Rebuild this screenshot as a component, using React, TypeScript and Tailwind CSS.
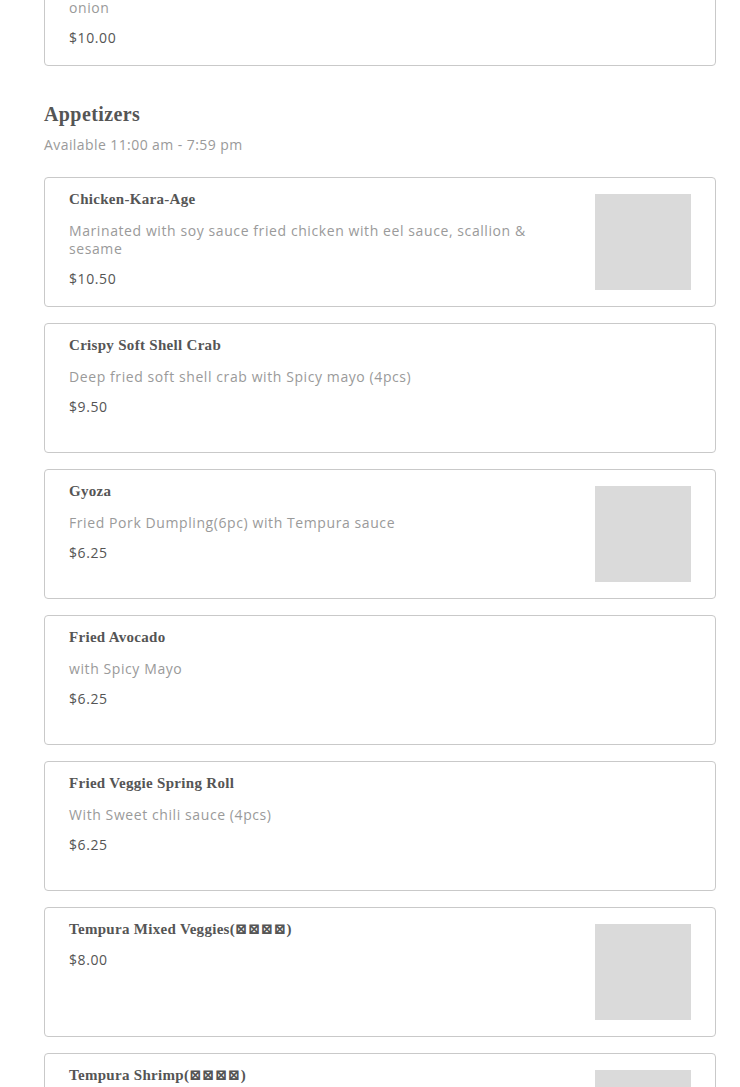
const serif = { fontFamily: '"Liberation Serif", "DejaVu Serif", serif' }

type Item = {
  name: string
  desc?: string
  price: string
  image?: boolean
}

const appetizers: Item[] = [
  { name: 'Chicken-Kara-Age', desc: 'Marinated with soy sauce fried chicken with eel sauce, scallion & sesame', price: '$10.50', image: true },
  { name: 'Crispy Soft Shell Crab', desc: 'Deep fried soft shell crab with Spicy mayo (4pcs)', price: '$9.50' },
  { name: 'Gyoza', desc: 'Fried Pork Dumpling(6pc) with Tempura sauce', price: '$6.25', image: true },
  { name: 'Fried Avocado', desc: 'with Spicy Mayo', price: '$6.25' },
  { name: 'Fried Veggie Spring Roll', desc: 'With Sweet chili sauce (4pcs)', price: '$6.25' },
  { name: 'Tempura Mixed Veggies(⊠⊠⊠⊠)', price: '$8.00', image: true },
  { name: 'Tempura Shrimp(⊠⊠⊠⊠)', price: '$9.00', image: true },
]

function MenuCard({ item }: { item: Item }) {
  return (
    <div className="flex items-start justify-between gap-4 min-h-[130px] rounded-[4px] border border-[#c9c9c9] bg-white px-6">
      <div className="flex-1 pt-[11px] pb-4">
        <div className="text-[15px] leading-[20px] font-bold tracking-[0.02em] text-[#555]" style={serif}>
          {item.name}
        </div>
        {item.desc && (
          <p className="mt-[13px] text-[14px] leading-[18px] tracking-[0.042em] text-[#9a9a9a] font-['Open_Sans',sans-serif]">
            {item.desc}
          </p>
        )}
        <div className="mt-[12px] text-[14px] leading-[18px] tracking-[0.042em] text-[#555] font-['Open_Sans',sans-serif]">
          {item.price}
        </div>
      </div>
      {item.image && <div className="mt-4 h-24 w-24 shrink-0 bg-[#dadada]" />}
    </div>
  )
}

export default function App() {
  return (
    <div className="min-h-screen bg-white">
      <div className="ml-[44px] w-[672px] -mt-[64px] pb-10">
        <MenuCard
          item={{
            name: 'Beef Negimaki',
            desc: 'Thinly sliced beef wrapped around scallion, grilled and served with teriyaki sauce & onion',
            price: '$10.00',
          }}
        />

        <h2 className="mt-[35px] text-[20px] leading-[26px] font-bold tracking-[0.02em] text-[#555]" style={serif}>
          Appetizers
        </h2>
        <p className="mt-[9px] text-[14px] leading-[18px] tracking-[0.03em] text-[#9a9a9a] font-['Open_Sans',sans-serif]">
          Available 11:00 am - 7:59 pm
        </p>

        <div className="mt-[23px] flex flex-col gap-4">
          {appetizers.map((item) => (
            <MenuCard key={item.name} item={item} />
          ))}
        </div>
      </div>
    </div>
  )
}
